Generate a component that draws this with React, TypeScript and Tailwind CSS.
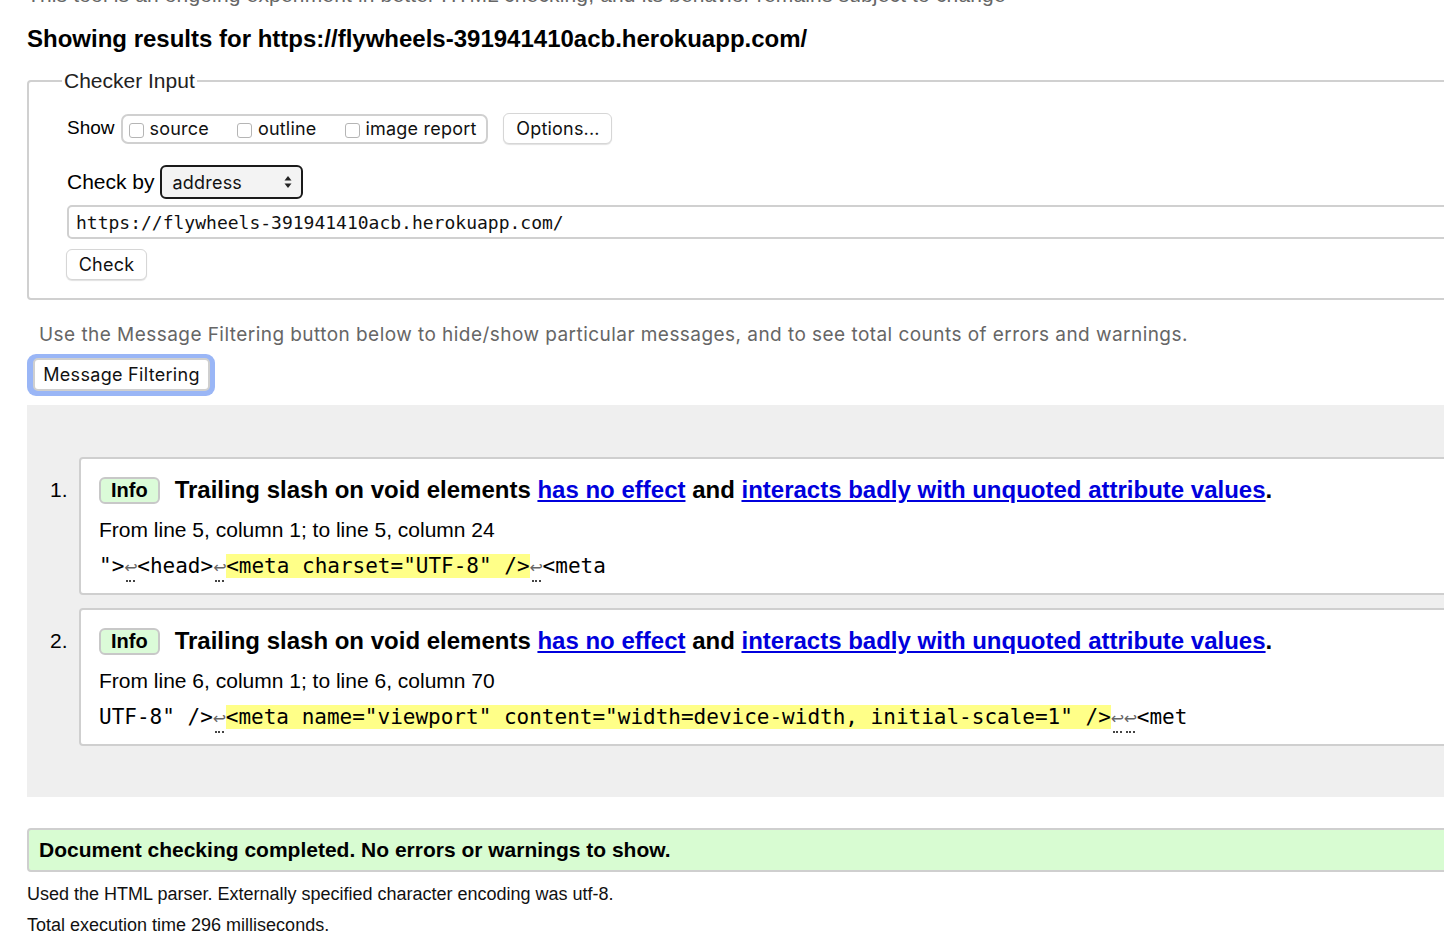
import type { ReactNode } from "react";

const sans = "font-['Liberation_Sans',Arial,sans-serif]";
const ui = "font-['Inter','Noto_Sans',sans-serif]";
const mono = "font-['DejaVu_Sans_Mono',monospace]";

const Lf = () => (
  <span className="relative inline-block w-[13px] text-center font-['DejaVu_Sans',sans-serif] text-[16px] leading-[14px] text-[#666]">
    ↩
    <span className="absolute right-[2px] bottom-[-7px] left-[2px] border-b-2 border-dotted border-[#444]" />
  </span>
);

const Mark = ({ children }: { children: ReactNode }) => <span className="bg-[#ffff88]">{children}</span>;

const SelectArrows = () => (
  <svg width="8" height="14" viewBox="0 0 8 14" className="text-[#222]">
    <path d="M4 1 L7.5 5.5 H0.5 Z" fill="currentColor" />
    <path d="M4 13 L7.5 8.5 H0.5 Z" fill="currentColor" />
  </svg>
);

const Checkbox = ({ label, className }: { label: string; className?: string }) => (
  <label className={`flex items-center ${className ?? ""}`}>
    <span className="mt-[3px] mr-[6px] inline-block h-[15px] w-[15px] rounded-[3px] border border-[#b5b5b5] bg-white" />
    <span>{label}</span>
  </label>
);

const Message = ({
  index,
  from,
  code
}: {
  index: number;
  from: string;
  code: ReactNode;
}) => (
  <li className="flex items-start">
    <span className={`w-[52px] shrink-0 pt-[21px] pl-[23px] text-[21px] leading-[24px] ${sans}`}>{index}.</span>
    <div className="flex-1 rounded-[4px] border-2 border-[#cfcfcf] bg-white pt-[17px] pr-4 pb-[15px] pl-[18px]">
      <p className={`flex items-center text-[24px] font-bold leading-[28px] text-black ${sans}`}>
        <span className="mr-[15px] inline-block rounded-[6px] border-2 border-[#c8c8c8] bg-[#dbfbd8] px-[10px] text-[20px] leading-[23px]">
          Info
        </span>
        <span>
          Trailing slash on void elements{" "}
          <a className="text-[#0000dd] underline" href="#">
            has no effect
          </a>{" "}
          and{" "}
          <a className="text-[#0000dd] underline" href="#">
            interacts badly with unquoted attribute values
          </a>
          .
        </span>
      </p>
      <p className={`mt-[14px] text-[21px] leading-[24px] text-black ${sans}`}>{from}</p>
      <p className={`mt-[12px] text-[21px] leading-[24px] whitespace-pre text-black ${mono}`}>{code}</p>
    </div>
  </li>
);

export default function App() {
  return (
    <div className={`h-[946px] w-[1444px] overflow-hidden bg-white text-black ${sans}`}>
      <div className="w-[1500px] pl-[27px]">
        <p className="mt-[-16px] text-[21px] leading-[22px] tracking-[0.15px] text-[#666]">
          This tool is an ongoing experiment in better HTML checking, and its behavior remains subject to change
        </p>

        <h2 className="mt-[19px] text-[24px] font-bold leading-[28px]">
          Showing results for https://flywheels-391941410acb.herokuapp.com/
        </h2>

        <fieldset className="mt-[16px] rounded-[4px] border-2 border-[#d0d0d0] pr-4 pb-[18px] pl-[33px]">
          <legend className="px-[2px] text-[21px] leading-[24px] text-[#222]">Checker Input</legend>

          <div className="mt-[20px] ml-[5px] flex items-center">
            <span className="mr-[6px] text-[19px]">Show</span>
            <div
              className={`flex h-[30px] items-center rounded-[7px] border-2 border-[#d0d0d0] pr-[10px] pl-[6px] text-[18px] tracking-[0.2px] text-[#111] ${ui}`}
            >
              <Checkbox label="source" className="mr-[28px]" />
              <Checkbox label="outline" className="mr-[28px]" />
              <Checkbox label="image report" />
            </div>
            <button
              className={`ml-[15px] h-[31px] w-[109px] rounded-[6px] border border-[#d6d6d6] bg-white text-[18px] tracking-[0.2px] text-[#111] shadow-[0_1px_1px_rgba(0,0,0,0.12)] ${ui}`}
              type="button"
            >
              Options...
            </button>
          </div>

          <div className="mt-[21px] ml-[5px] flex items-center">
            <span className="mr-[5px] text-[21px]">Check by</span>
            <div
              className={`flex h-[34px] w-[143px] items-center justify-between rounded-[6px] border-2 border-[#1a1a1a] bg-[#f3f3f3] pr-[9px] pl-[11px] text-[18px] tracking-[0.2px] text-[#111] ${ui}`}
            >
              <span>address</span>
              <SelectArrows />
            </div>
          </div>

          <div className="mt-[6px] ml-[5px] flex h-[34px] items-center rounded-[5px] border-2 border-[#d0d0d0] pl-[7px]">
            <span className={`text-[18px] text-[#111] ${mono}`}>https://flywheels-391941410acb.herokuapp.com/</span>
          </div>

          <button
            className={`mt-[10px] ml-[4px] h-[31px] w-[81px] rounded-[6px] border border-[#d6d6d6] bg-white text-[18px] tracking-[0.2px] text-[#111] shadow-[0_1px_1px_rgba(0,0,0,0.12)] ${ui}`}
            type="button"
          >
            Check
          </button>
        </fieldset>

        <p className={`mt-[24px] ml-[12px] text-[19px] leading-[22px] tracking-[0.45px] text-[#666] ${ui}`}>
          Use the Message Filtering button below to hide/show particular messages, and to see total counts of errors and
          warnings.
        </p>

        <div className="mt-[8px] flex w-fit rounded-[9px] bg-[#9ab6f6] pt-[4px] pr-[5px] pb-[5px] pl-[6px]">
          <button
            className={`h-[33px] w-[177px] rounded-[5px] border-2 border-[#cfcfcf] bg-white text-[18px] tracking-[0.3px] text-[#111] ${ui}`}
            type="button"
          >
            Message Filtering
          </button>
        </div>

        <div className="mt-[9px] bg-[#efefef] pt-[52px] pb-[51px]">
          <ol className="flex flex-col gap-[13px]">
            <Message
              index={1}
              from="From line 5, column 1; to line 5, column 24"
              code={
                <>
                  {'">'}
                  <Lf />
                  {"<head>"}
                  <Lf />
                  <Mark>{'<meta charset="UTF-8" />'}</Mark>
                  <Lf />
                  {"<meta"}
                </>
              }
            />
            <Message
              index={2}
              from="From line 6, column 1; to line 6, column 70"
              code={
                <>
                  {'UTF-8" />'}
                  <Lf />
                  <Mark>{'<meta name="viewport" content="width=device-width, initial-scale=1" />'}</Mark>
                  <Lf />
                  <Lf />
                  {"<met"}
                </>
              }
            />
          </ol>
        </div>

        <div className="mt-[31px] flex h-[44px] items-center rounded-[4px] border-2 border-[#cfcfcf] bg-[#d8fcd2] pl-[10px]">
          <p className="text-[21px] font-bold">Document checking completed. No errors or warnings to show.</p>
        </div>

        <p className="mt-[11px] text-[18px] leading-[22px] text-[#111]">
          Used the HTML parser. Externally specified character encoding was utf-8.
        </p>
        <p className="mt-[9px] text-[18px] leading-[22px] text-[#111]">Total execution time 296 milliseconds.</p>
      </div>
    </div>
  );
}
